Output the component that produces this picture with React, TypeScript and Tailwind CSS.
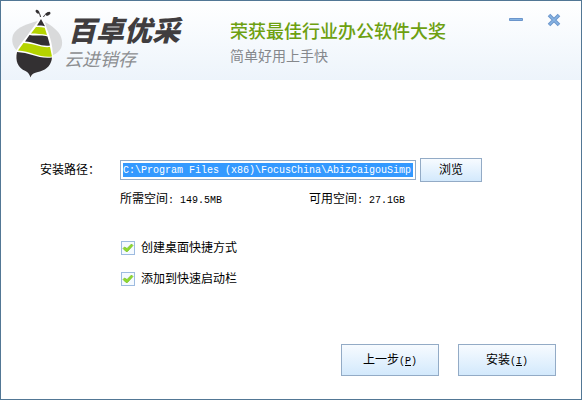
import React, { useState } from 'react';

const panelButton =
  'border border-[#93abc6] bg-linear-to-b from-[#f7fbff] to-[#d3e9fc] text-xs text-black hover:to-[#bfdffb]';

function BeeLogo() {
  return (
    <svg viewBox="0 0 52 70" className="h-[70px] w-[52px] shrink-0" aria-hidden="true">
      <path d="M26 12C18 14 4 18 1 26c-2 6 0 13 5 16z" fill="#d9dadb" />
      <path d="M33 13c6 3 14 9 16 15 3 8 0 15-8 18z" fill="#d9dadb" />
      <path
        d="M29 8L17 24C12 31 4 39 3.500 45c0 9 4 15 14 18l1 6 3-5c8-2 17-7 19-15C42 36 36 20 29 8z"
        fill="#fff"
      />
      <path d="M29 10l-4 6.500c3 0 5 0 8 .7z" fill="#333032" />
      <path d="M24 18c3-.3 6 0 8.700.7L35 26c-5-1.500-11-.5-16-1.500z" fill="#b5d400" />
      <path d="M17.500 26c6 1.500 12-.5 18 1.500l2.500 9c-8 1.500-16-3.500-25-4z" fill="#333032" />
      <path d="M11.500 34c9 0 17 5 26.500 4l2 9.500c-12 1.500-21-5-34-6z" fill="#b5d400" />
      <path
        d="M5 43c13 .5 22 7.500 35 5.500-.5 7-5 12-12 14-6 1.500-8 2-9.500 6-1-3-2-5-5-6.500C6 59 3 52 5 43z"
        fill="#333032"
      />
      <path d="M28.500 8c-.5-3-1.500-5-4-6" fill="none" stroke="#333032" strokeWidth="1" />
      <path d="M31.500 8c1-2.500 3-4 6-4" fill="none" stroke="#333032" strokeWidth="1" />
      <ellipse cx="25.5" cy="2.7" rx="2.3" ry="1.5" transform="rotate(45 25.5 2.7)" fill="#333032" />
      <ellipse cx="36" cy="4.8" rx="2.7" ry="1.6" transform="rotate(-25 36 4.8)" fill="#333032" />
    </svg>
  );
}

function Mono({ children }: { children: React.ReactNode }) {
  return <span className="font-['Liberation_Mono',monospace] text-[10px]">{children}</span>;
}

interface OptionProps {
  id: string;
  label: string;
}

function Option({ id, label }: OptionProps) {
  const [checked, setChecked] = useState(true);

  return (
    <div className="flex h-4 items-center gap-1.5">
      <span className="grid">
        <input
          id={id}
          type="checkbox"
          checked={checked}
          onChange={(e) => setChecked(e.target.checked)}
          className="col-start-1 row-start-1 size-3.5 appearance-none border border-[#9dbbe0] bg-[#f5faff]"
        />
        {checked && (
          <svg viewBox="0 0 14 14" className="pointer-events-none col-start-1 row-start-1 size-3.5">
            <path
              d="M2 7.500l1.500-1.500L6 7.500 10.500 3 12 4.500 6.500 10.500H5z"
              fill="#8fd92f"
              stroke="#75bd22"
              strokeWidth="0.7"
            />
          </svg>
        )}
      </span>
      <label htmlFor={id}>{label}</label>
    </div>
  );
}

export default function App() {
  const [path, setPath] = useState('C:\\Program Files (x86)\\FocusChina\\AbizCaigouSimp');

  return (
    <div className="flex min-h-screen flex-col border border-[#527795] bg-white font-['Liberation_Sans','Noto_Sans_CJK_SC',sans-serif] text-xs text-black">
      <header className="flex h-[79px] items-start bg-linear-to-b from-white to-[#edf4fb] pl-[11px]">
        <div className="flex shrink-0 items-start pt-2">
          <BeeLogo />
          <div className="flex flex-col pt-[5px] italic">
            <span className="pl-1 text-[28px]/9 font-black text-[#403d3f]">百卓优采</span>
            <span className="text-lg/5 text-[#8c8e91]">云进销存</span>
          </div>
        </div>
        <div className="ml-[50px] flex shrink-0 flex-col pt-[19px]">
          <span className="text-lg/6 font-medium text-[#6da010]">荣获最佳行业办公软件大奖</span>
          <span className="mt-0.5 text-sm/5 text-[#85888c]">简单好用上手快</span>
        </div>
        <div className="ml-auto flex gap-3.5 pt-[7px] pr-[15px]">
          <button type="button" aria-label="最小化" className="grid size-6 place-items-center">
            <svg viewBox="0 0 16 16" className="size-4">
              <path d="M1.500 6.500h13v2h-13z" fill="#86b4e3" stroke="#6b95cb" />
            </svg>
          </button>
          <button type="button" aria-label="关闭" className="grid size-6 place-items-center">
            <svg viewBox="0 0 14 14" className="size-3.5">
              <path d="M2 2l10 10M12 2L2 12" stroke="#6b95cb" strokeWidth="3.6" />
              <path d="M2.500 2.500l9 9M11.500 2.500l-9 9" stroke="#86b4e3" strokeWidth="1.6" />
            </svg>
          </button>
        </div>
      </header>

      <main className="flex flex-1 flex-col pt-[78px] pr-[99px] pl-[39px]">
        <div className="flex h-6 items-center">
          <label htmlFor="install-path" className="w-20 shrink-0">
            安装路径：
          </label>
          <div className="flex h-5 min-w-0 flex-1 border border-[#93abc6] p-0.5">
            <input
              id="install-path"
              type="text"
              value={path}
              onChange={(e) => setPath(e.target.value)}
              className="h-3.5 w-full min-w-0 bg-[#3399ff] font-['Liberation_Mono',monospace] text-[10px]/3 text-white outline-none"
            />
          </div>
          <button type="button" className={`${panelButton} ml-1 h-6 w-[62px] shrink-0`}>
            浏览
          </button>
        </div>

        <div className="mt-[9px] flex pl-20 leading-4">
          <p className="w-[189px]">
            所需空间<Mono>: 149.5MB</Mono>
          </p>
          <p>
            可用空间<Mono>: 27.1GB</Mono>
          </p>
        </div>

        <div className="mt-[31px] flex flex-col gap-[15px] pl-[81px]">
          <Option id="desktop-shortcut" label="创建桌面快捷方式" />
          <Option id="quick-launch" label="添加到快速启动栏" />
        </div>
      </main>

      <footer className="flex justify-end gap-[19px] pr-[25px] pb-[23px]">
        <button type="button" accessKey="p" className={`${panelButton} h-8 w-[98px]`}>
          上一步
          <Mono>
            (<u>P</u>)
          </Mono>
        </button>
        <button type="button" accessKey="i" className={`${panelButton} h-8 w-[98px]`}>
          安装
          <Mono>
            (<u>I</u>)
          </Mono>
        </button>
      </footer>
    </div>
  );
}
